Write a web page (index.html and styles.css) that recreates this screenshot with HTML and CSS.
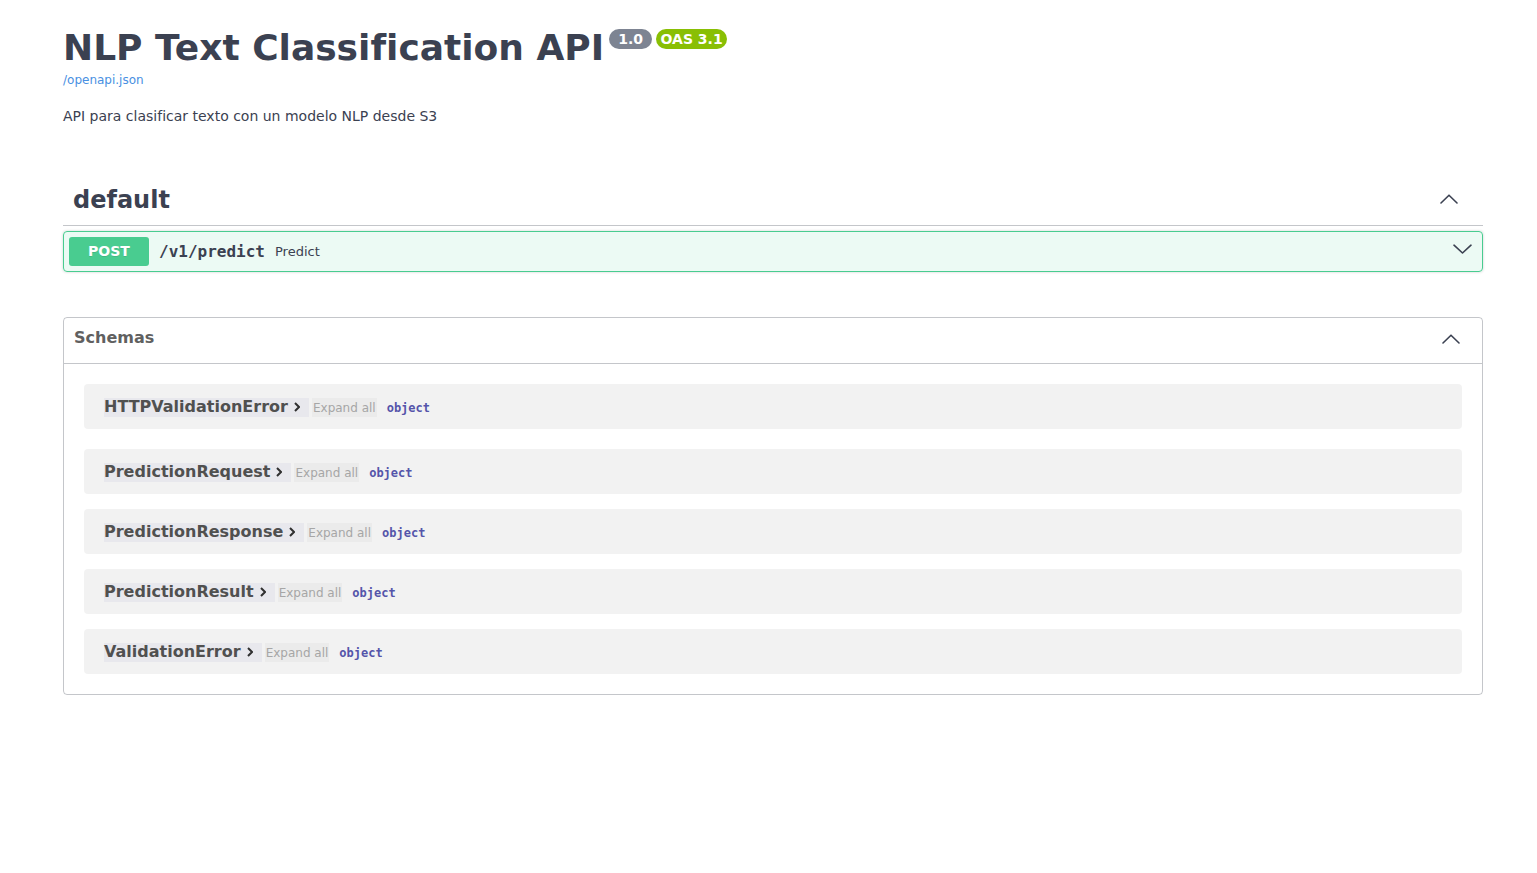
FILE: index.html
```html
<!DOCTYPE html>
<html lang="es">
<head>
<meta charset="utf-8">
<title>NLP Text Classification API</title>
<link rel="stylesheet" href="styles.css">
</head>
<body>
<div class="page">
  <section class="info">
    <div class="title-row">
      <h2 class="title">NLP Text Classification API</h2>
      <span class="badge badge-version">1.0</span>
      <span class="badge badge-oas">OAS 3.1</span>
    </div>
    <a class="base-url" href="#">/openapi.json</a>
    <p class="description">API para clasificar texto con un modelo NLP desde S3</p>
  </section>

  <section class="tag-section">
    <h3 class="tag-header">
      <span class="tag-name">default</span>
      <svg class="chev chev-tag" width="18" height="10" viewBox="0 0 18 10"><polyline points="1,9 9,1.2 17,9" fill="none" stroke="#3b4151" stroke-width="1.6" stroke-linecap="round" stroke-linejoin="round"/></svg>
    </h3>
    <div class="opblock">
      <span class="method">POST</span>
      <span class="path">/v1/predict</span>
      <span class="summary-desc">Predict</span>
      <svg class="chev chev-op" width="19" height="10" viewBox="0 0 19 10"><polyline points="1,1.2 9.5,9 18,1.2" fill="none" stroke="#3b4151" stroke-width="1.6" stroke-linecap="round" stroke-linejoin="round"/></svg>
    </div>
  </section>

  <section class="models">
    <h4 class="models-header">
      <span class="models-title">Schemas</span>
      <svg class="chev chev-models" width="18" height="10" viewBox="0 0 18 10"><polyline points="1,9 9,1.2 17,9" fill="none" stroke="#3b4151" stroke-width="1.6" stroke-linecap="round" stroke-linejoin="round"/></svg>
    </h4>
    <div class="model-list">
      <div class="model">
        <span class="model-name">HTTPValidationError<svg class="chev-right" width="6" height="10" viewBox="0 0 6 10"><polyline points="1,1 5,5 1,9" fill="none" stroke="#303030" stroke-width="2"/></svg></span>
        <span class="expand">Expand all</span>
        <span class="type">object</span>
      </div>
      <div class="model">
        <span class="model-name">PredictionRequest<svg class="chev-right" width="6" height="10" viewBox="0 0 6 10"><polyline points="1,1 5,5 1,9" fill="none" stroke="#303030" stroke-width="2"/></svg></span>
        <span class="expand">Expand all</span>
        <span class="type">object</span>
      </div>
      <div class="model">
        <span class="model-name">PredictionResponse<svg class="chev-right" width="6" height="10" viewBox="0 0 6 10"><polyline points="1,1 5,5 1,9" fill="none" stroke="#303030" stroke-width="2"/></svg></span>
        <span class="expand">Expand all</span>
        <span class="type">object</span>
      </div>
      <div class="model">
        <span class="model-name">PredictionResult<svg class="chev-right" width="6" height="10" viewBox="0 0 6 10"><polyline points="1,1 5,5 1,9" fill="none" stroke="#303030" stroke-width="2"/></svg></span>
        <span class="expand">Expand all</span>
        <span class="type">object</span>
      </div>
      <div class="model">
        <span class="model-name">ValidationError<svg class="chev-right" width="6" height="10" viewBox="0 0 6 10"><polyline points="1,1 5,5 1,9" fill="none" stroke="#303030" stroke-width="2"/></svg></span>
        <span class="expand">Expand all</span>
        <span class="type">object</span>
      </div>
    </div>
  </section>
</div>
</body>
</html>
```
FILE: styles.css
```css
body {
  margin: 0;
  background: #fff;
  color: #3b4151;
  font-family: "DejaVu Sans", sans-serif;
}

.page {
  width: 1420px;
  margin-left: 63px;
}

/* info */
.info {
  padding-top: 27px;
}

.title-row {
  display: flex;
  align-items: flex-start;
  height: 42px;
}

.title {
  margin: 0;
  font-size: 36px;
  line-height: 42px;
  font-weight: 700;
  color: #3b4151;
}

.badge {
  margin-top: 2px;
  height: 20px;
  border-radius: 10px;
  color: #fff;
  font-size: 14px;
  font-weight: 700;
  line-height: 20px;
  text-align: center;
}

.badge-version {
  width: 43px;
  margin-left: 5px;
  background: #7d8492;
}

.badge-oas {
  width: 71px;
  margin-left: 4px;
  background: #89bf04;
}

.base-url {
  display: block;
  width: max-content;
  margin-top: 4px;
  font-size: 12px;
  line-height: 14px;
  font-weight: 400;
  color: #4990e2;
  text-decoration: none;
}

.description {
  margin: 21px 0 0;
  font-size: 14px;
  line-height: 16px;
  color: #3b4151;
}

/* tag section */
.tag-header {
  display: flex;
  align-items: center;
  justify-content: space-between;
  box-sizing: border-box;
  height: 51px;
  margin: 51px 0 5px;
  padding: 0 25px 0 10px;
  border-bottom: 1px solid rgba(59, 65, 81, 0.3);
  font-size: 24px;
  line-height: 28px;
  font-weight: 700;
  color: #3b4151;
}

.chev {
  display: block;
  flex: none;
}

.chev-tag {
  margin-bottom: 2px;
}

.opblock {
  display: flex;
  align-items: center;
  padding: 5px;
  border: 1px solid #49cc90;
  border-radius: 4px;
  background: rgba(73, 204, 144, 0.1);
  box-shadow: 0 0 3px rgba(0, 0, 0, 0.19);
}

.method {
  width: 80px;
  padding: 6px 0;
  border-radius: 3px;
  background: #49cc90;
  color: #fff;
  font-size: 14px;
  line-height: 17px;
  font-weight: 700;
  text-align: center;
  text-shadow: 0 1px 0 rgba(0, 0, 0, 0.1);
}

.path {
  padding: 0 10px;
  font-family: "DejaVu Sans Mono", monospace;
  font-size: 16px;
  font-weight: 700;
  color: #3b4151;
}

.summary-desc {
  flex: 1;
  font-size: 13px;
  color: #3b4151;
}

.chev-op {
  margin: 0 5px 6px 0;
}

/* models */
.models {
  margin-top: 45px;
  padding-bottom: 20px;
  border: 1px solid rgba(59, 65, 81, 0.3);
  border-radius: 4px;
}

.models-header {
  display: flex;
  align-items: flex-start;
  justify-content: space-between;
  box-sizing: border-box;
  height: 46px;
  margin: 0;
  padding: 0 22px 0 10px;
  border-bottom: 1px solid rgba(59, 65, 81, 0.3);
  font-size: 16px;
  line-height: 19px;
  font-weight: 700;
  color: #606060;
}

.models-title {
  margin-top: 10px;
}

.chev-models {
  margin-top: 16px;
}

.model-list {
  display: flex;
  flex-direction: column;
  gap: 15px;
  padding: 20px 20px 0;
}

.model:first-child {
  margin-bottom: 5px;
}

.model {
  display: flex;
  align-items: flex-start;
  box-sizing: border-box;
  height: 45px;
  padding: 14px 20px 0;
  border-radius: 4px;
  background: rgba(0, 0, 0, 0.05);
}

.model-name {
  display: flex;
  align-items: flex-start;
  box-sizing: border-box;
  height: 19px;
  padding-right: 9px;
  background: #e8e8ed;
  font-size: 16px;
  line-height: 18px;
  font-weight: 700;
  color: #505050;
}

.chev-right {
  display: block;
  margin: 4px 0 0 6px;
}

.expand {
  box-sizing: border-box;
  height: 19px;
  margin: 0 0 0 3px;
  padding: 3px 1px 0;
  background: #ebebeb;
  font-size: 12px;
  line-height: 14px;
  color: #a6a6a6;
}

.type {
  margin: 3px 0 0 10px;
  font-family: "DejaVu Sans Mono", monospace;
  font-size: 12px;
  line-height: 14px;
  font-weight: 700;
  color: #55a;
}
```
